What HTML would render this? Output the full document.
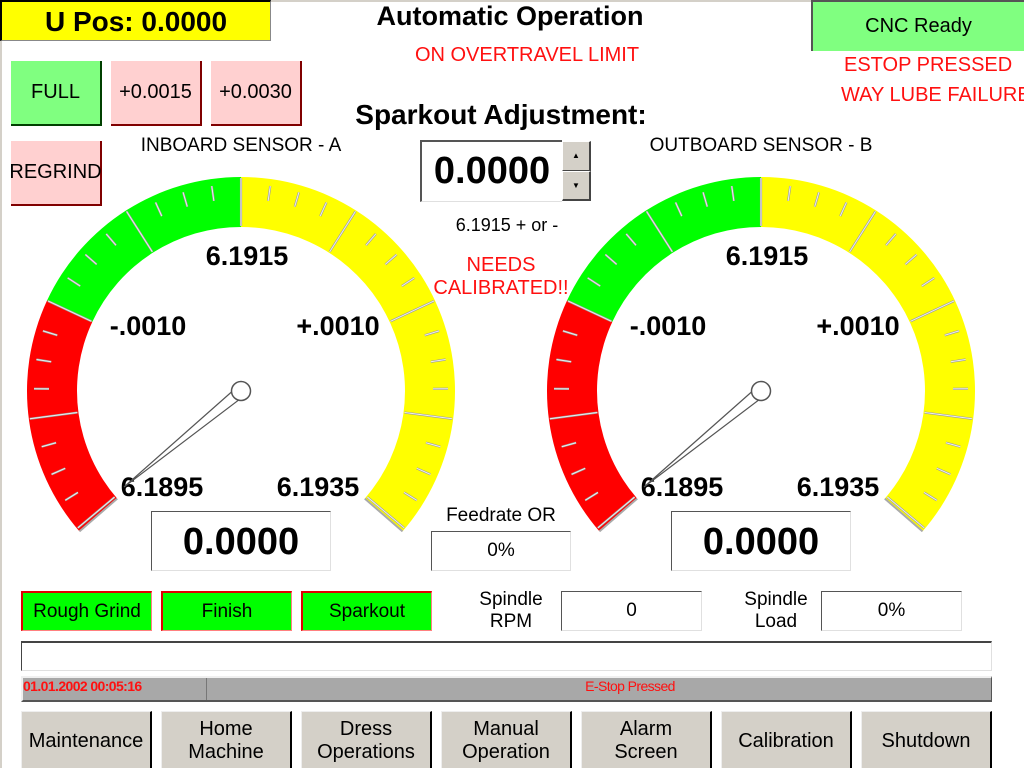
<!DOCTYPE html>
<html><head><meta charset="utf-8"><style>
*{margin:0;padding:0;box-sizing:border-box}
body{width:1024px;height:768px;background:#fff;position:relative;overflow:hidden;font-family:"Liberation Sans",Arial,sans-serif;color:#000}
.a{position:absolute}
.t{position:absolute;white-space:nowrap;text-align:center}
.btn{position:absolute;display:flex;align-items:center;justify-content:center;text-align:center;font-size:20px;line-height:23px}
.pink{background:#ffd0d0;border-right:2px solid #800000;border-bottom:2px solid #800000}
.lg{background:#80ff80;border-right:2px solid #004000;border-bottom:2px solid #004000}
.mode{background:#00ff00;border-top:2px solid #e00000;border-left:2px solid #e00000;border-right:1px solid #ff8080;border-bottom:1px solid #ff8080;font-size:19px}
.box{position:absolute;background:#fff;border-top:1px solid #555;border-left:1px solid #555;border-right:1px solid #e0e0e0;border-bottom:1px solid #e0e0e0;display:flex;align-items:center;justify-content:center}
.nav{background:#d4d0c8;border-right:2px solid #000;border-top:1px solid #eee;border-left:1px solid #eee;font-size:20px;line-height:23px}
.red{color:#ff1010}
</style></head><body>
<div class="a" style="left:0;top:0;width:2px;height:768px;background:#d4d0c8"></div>
<div class="a" style="left:0;top:0;width:1024px;height:2px;background:#d4d0c8"></div>

<div class="btn" style="left:0;top:0;width:271px;height:41px;background:#ffff00;border-top:2px solid #000;border-left:2px solid #000;border-right:1px solid #888;border-bottom:1px solid #888;font-weight:bold;font-size:28px">U Pos: 0.0000</div>
<div class="t" style="left:310px;width:400px;top:1px;font-weight:bold;font-size:27px">Automatic Operation</div>
<div class="t red" style="left:327px;width:400px;top:44px;font-size:20px">ON OVERTRAVEL LIMIT</div>
<div class="btn" style="left:811px;top:0;width:213px;height:51px;background:#80ff80;border-top:2px solid #555;border-left:2px solid #555;font-size:20px">CNC Ready</div>
<div class="a red" style="left:844px;top:54px;font-size:20px;white-space:nowrap">ESTOP PRESSED</div>
<div class="a red" style="left:841px;top:84px;font-size:20px;white-space:nowrap">WAY LUBE FAILURE</div>

<div class="btn lg" style="left:11px;top:61px;width:91px;height:65px">FULL</div>
<div class="btn pink" style="left:111px;top:61px;width:91px;height:65px">+0.0015</div>
<div class="btn pink" style="left:211px;top:61px;width:91px;height:65px">+0.0030</div>
<div class="btn pink" style="left:11px;top:141px;width:91px;height:65px">REGRIND</div>

<div class="t" style="left:301px;width:400px;top:99px;font-weight:bold;font-size:28px">Sparkout Adjustment:</div>
<div class="a" style="left:420px;top:140px;width:142px;height:62px;border-top:2px solid #555;border-left:2px solid #555;border-bottom:1px solid #e0e0e0;background:#fff;font-weight:bold;font-size:38px;display:flex;align-items:center;justify-content:center">0.0000</div>
<div class="a" style="left:562px;top:141px;width:29px;height:30px;background:#d4d0c8;border:1px solid #fff;border-right:2px solid #444;border-bottom:1px solid #444;font-size:8px;text-align:center;line-height:28px">▲</div>
<div class="a" style="left:562px;top:171px;width:29px;height:30px;background:#d4d0c8;border:1px solid #fff;border-right:2px solid #444;border-bottom:2px solid #444;font-size:8px;text-align:center;line-height:28px">▼</div>
<div class="t" style="left:407px;width:200px;top:215px;font-size:18px">6.1915 + or -</div>
<div class="t red" style="left:401px;width:200px;top:254px;font-size:20px;line-height:23px">NEEDS<br>CALIBRATED!!</div>

<div class="t" style="left:91px;width:300px;top:135px;font-size:19px">INBOARD SENSOR - A</div>
<div class="t" style="left:611px;width:300px;top:135px;font-size:19px">OUTBOARD SENSOR - B</div>

<svg class="a" style="left:0;top:0" width="1024" height="768" id="g"></svg>

<div class="box" style="left:151px;top:511px;width:180px;height:60px;font-weight:bold;font-size:38px;padding-top:3px">0.0000</div>
<div class="box" style="left:671px;top:511px;width:180px;height:60px;font-weight:bold;font-size:38px;padding-top:3px">0.0000</div>
<div class="t" style="left:401px;width:200px;top:505px;font-size:19px">Feedrate OR</div>
<div class="box" style="left:431px;top:531px;width:140px;height:40px;font-size:19px">0%</div>

<div class="btn mode" style="left:21px;top:591px;width:131px;height:40px">Rough Grind</div>
<div class="btn mode" style="left:161px;top:591px;width:131px;height:40px">Finish</div>
<div class="btn mode" style="left:301px;top:591px;width:131px;height:40px">Sparkout</div>
<div class="t" style="left:461px;width:100px;top:589px;font-size:19px;line-height:22px">Spindle<br>RPM</div>
<div class="box" style="left:561px;top:591px;width:141px;height:40px;font-size:19px">0</div>
<div class="t" style="left:726px;width:100px;top:589px;font-size:19px;line-height:22px">Spindle<br>Load</div>
<div class="box" style="left:821px;top:591px;width:141px;height:40px;font-size:19px">0%</div>

<div class="a" style="left:21px;top:641px;width:971px;height:30px;border-top:2px solid #444;border-left:1px solid #444;border-bottom:1px solid #e0e0e0;border-right:1px solid #e0e0e0;background:#fff"></div>
<div class="a" style="left:21px;top:676px;width:971px;height:26px;background:#a8a8a8;border-top:2px solid #f0f0f0;border-left:2px solid #f0f0f0;border-bottom:2px solid #555;border-right:1px solid #555"></div>
<div class="a" style="left:206px;top:678px;width:1px;height:22px;background:#777"></div>
<div class="a red" style="left:23px;top:678px;font-size:14px;font-weight:bold;white-space:nowrap;letter-spacing:-0.6px">01.01.2002 00:05:16</div>
<div class="t red" style="left:530px;width:200px;top:678px;font-size:14px;letter-spacing:-0.6px">E-Stop Pressed</div>

<div class="btn nav" style="left:21px;top:711px;width:131px;height:57px;padding-top:2px">Maintenance</div>
<div class="btn nav" style="left:161px;top:711px;width:131px;height:57px;padding-top:2px">Home<br>Machine</div>
<div class="btn nav" style="left:301px;top:711px;width:131px;height:57px;padding-top:2px">Dress<br>Operations</div>
<div class="btn nav" style="left:441px;top:711px;width:131px;height:57px;padding-top:2px">Manual<br>Operation</div>
<div class="btn nav" style="left:581px;top:711px;width:131px;height:57px;padding-top:2px">Alarm<br>Screen</div>
<div class="btn nav" style="left:721px;top:711px;width:131px;height:57px;padding-top:2px">Calibration</div>
<div class="btn nav" style="left:861px;top:711px;width:131px;height:57px;padding-top:2px">Shutdown</div>

<script>
var s='';
function P(cx,cy,r,a){a=a*Math.PI/180;return [(cx+r*Math.sin(a)).toFixed(2),(cy-r*Math.cos(a)).toFixed(2)];}
function seg(cx,cy,a0,a1,col){var R=214,r=164;var p1=P(cx,cy,R,a0),p2=P(cx,cy,R,a1),p3=P(cx,cy,r,a1),p4=P(cx,cy,r,a0);var l=(a1-a0)>180?1:0;
return '<path d="M'+p1+' A'+R+' '+R+' 0 '+l+' 1 '+p2+' L'+p3+' A'+r+' '+r+' 0 '+l+' 0 '+p4+' Z" fill="'+col+'"/>';}
function gauge(cx){var cy=391;var E=131;
s+=seg(cx,cy,-E,-65,'#ff0000')+seg(cx,cy,-65,0,'#00ff00')+seg(cx,cy,0,E,'#ffff00');
for(var i=-16;i<=16;i++){var a=i*8.125;var maj=(i%4==0);var o=maj?213:207,n=maj?165:192;var p=P(cx,cy,o,a),q=P(cx,cy,n,a);
s+='<line x1="'+p[0]+'" y1="'+p[1]+'" x2="'+q[0]+'" y2="'+q[1]+'" stroke="#999" stroke-width="2.2"/><line x1="'+p[0]+'" y1="'+p[1]+'" x2="'+q[0]+'" y2="'+q[1]+'" stroke="#eee" stroke-width="1"/>';}
var e1=P(cx,cy,214,-E),e2=P(cx,cy,164,-E),e3=P(cx,cy,214,E),e4=P(cx,cy,164,E);
s+='<line x1="'+e1[0]+'" y1="'+e1[1]+'" x2="'+e2[0]+'" y2="'+e2[1]+'" stroke="#aaa" stroke-width="2"/>';
s+='<line x1="'+e3[0]+'" y1="'+e3[1]+'" x2="'+e4[0]+'" y2="'+e4[1]+'" stroke="#aaa" stroke-width="2"/>';
var f='font-family="Liberation Sans,Arial,sans-serif" font-weight="bold" font-size="27" text-anchor="middle"';
s+='<text x="'+(cx+6)+'" y="265" '+f+'>6.1915</text>';
s+='<text x="'+(cx-93)+'" y="335" '+f+'>-.0010</text>';
s+='<text x="'+(cx+97)+'" y="335" '+f+'>+.0010</text>';
s+='<text x="'+(cx-79)+'" y="496" '+f+'>6.1895</text>';
s+='<text x="'+(cx+77)+'" y="496" '+f+'>6.1935</text>';
var tx=cx-117,ty=487;
s+='<polygon points="'+(tx)+','+(ty)+' '+(cx-5)+','+(cy-3)+' '+(cx+3)+','+(cy+5)+'" fill="#fff" stroke="#555" stroke-width="1.2"/>';
s+='<circle cx="'+cx+'" cy="'+cy+'" r="9.5" fill="#fff" stroke="#555" stroke-width="1.5"/>';
}
gauge(241);gauge(761);
document.getElementById('g').innerHTML=s;
</script>
</body></html>
